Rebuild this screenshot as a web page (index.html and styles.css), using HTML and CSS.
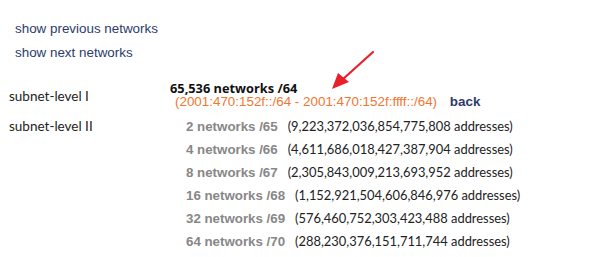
FILE: index.html
```html
<!DOCTYPE html>
<html lang="en">
<head>
  <meta charset="UTF-8" />
  <title>Subnet levels</title>
  <link rel="stylesheet" href="styles.css">
</head>
<body>

  <div class="paging">
    <a href="#">show previous networks</a>
    <a href="#">show next networks</a>
  </div>

  <div class="levels">
    <div class="level-name level-one">subnet-level I</div>
    <div class="level-body">
      <div class="current">65,536 networks /64</div>
      <div class="range">
        <span class="range-text">(2001:470:152f::/64 - 2001:470:152f:ffff::/64)</span>
        <a href="#" class="back">back</a>
      </div>
    </div>

    <div class="level-name level-two">subnet-level II</div>
    <ul class="splits">
      <li><a href="#">2 networks /65</a><span>(9,223,372,036,854,775,808 addresses)</span></li>
      <li><a href="#">4 networks /66</a><span>(4,611,686,018,427,387,904 addresses)</span></li>
      <li><a href="#">8 networks /67</a><span>(2,305,843,009,213,693,952 addresses)</span></li>
      <li><a href="#">16 networks /68</a><span>(1,152,921,504,606,846,976 addresses)</span></li>
      <li><a href="#">32 networks /69</a><span>(576,460,752,303,423,488 addresses)</span></li>
      <li><a href="#">64 networks /70</a><span>(288,230,376,151,711,744 addresses)</span></li>
    </ul>
  </div>

  <!-- annotation arrow -->
  <svg class="arrow" width="60" height="60" viewBox="0 0 60 60">
    <line x1="45" y1="2" x2="14" y2="30" stroke="#e8202a" stroke-width="2.2" stroke-linecap="round"/>
    <polygon points="4,39 10,23 21,32" fill="#e8202a"/>
  </svg>

</body>
</html>
```

FILE: styles.css
```css
body {
  margin: 0;
  padding: 8px;
  font-family: 'Liberation Sans', Arial, sans-serif;
  font-size: 13.4px;
  color: #222;
  background: #fff;
  position: relative;
}

a {
  text-decoration: none;
}

/* Paging links */
.paging {
  padding: 9px 0 0 7px;
}

.paging a {
  display: block;
  color: #2c3b6b;
  line-height: 24px;
}

/* Subnet levels */
.levels {
  display: grid;
  grid-template-columns: 162px auto;
  margin-top: 17px;
  row-gap: 6px;
}

.level-name {
  font-family: 'Lato', sans-serif;
  font-size: 13.5px;
  color: #222;
  padding-left: 1px;
}

.level-one {
  align-self: center;
}

.level-two {
  line-height: 23px;
}

.current {
  font-family: 'Open Sans', sans-serif;
  font-weight: bold;
  font-size: 12.8px;
  color: #111;
  line-height: 13px;
}

.range {
  padding-left: 5px;
  line-height: 14px;
}

.range-text {
  color: #ef7732;
}

.back {
  font-weight: bold;
  color: #2c3b6b;
  margin-left: 9px;
}

.splits {
  list-style: none;
  margin: 0;
  padding: 0 0 0 16px;
}

.splits li {
  display: flex;
  align-items: baseline;
  gap: 10px;
  height: 23px;
  line-height: 23px;
}

.splits a {
  color: #878787;
  font-weight: bold;
  font-size: 13.3px;
}

.splits span {
  font-family: 'Lato', sans-serif;
  font-size: 12.9px;
  color: #222;
}

.arrow {
  position: absolute;
  left: 328px;
  top: 50px;
}
```
